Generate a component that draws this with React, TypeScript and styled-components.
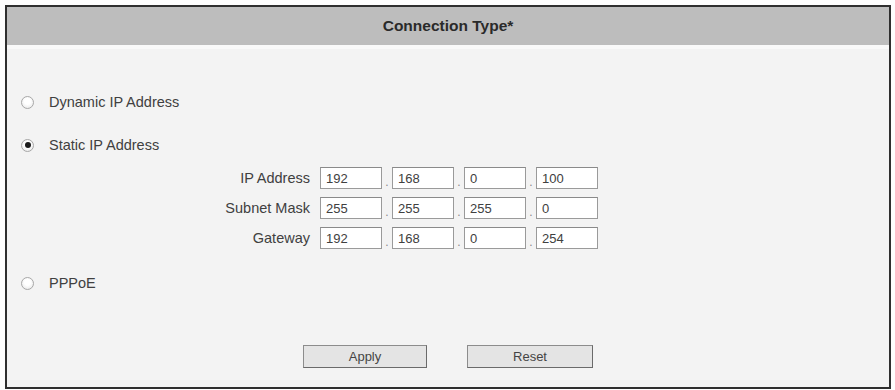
import React from 'react';
import styled, { createGlobalStyle } from 'styled-components';

const GlobalStyle = createGlobalStyle`
  html, body {
    margin: 0;
    padding: 0;
    background: #fdfdfd;
  }
  body {
    font-family: 'Liberation Sans', Arial, sans-serif;
  }
`;

const octets = {
  ip: ['192', '168', '0', '100'],
  mask: ['255', '255', '255', '0'],
  gateway: ['192', '168', '0', '254'],
};

const Radio: React.FC<{ checked?: boolean }> = ({ checked }) => (
  <RadioCircle>{checked && <RadioDot />}</RadioCircle>
);

const OctetRow: React.FC<{ label: string; values: string[] }> = ({ label, values }) => (
  <>
    <FieldLabel>{label}</FieldLabel>
    <Octets>
      {values.map((v, i) => (
        <React.Fragment key={i}>
          {i > 0 && <Dot>.</Dot>}
          <Octet defaultValue={v} />
        </React.Fragment>
      ))}
    </Octets>
  </>
);

const App: React.FC = () => {
  return (
    <>
      <GlobalStyle />
      <Frame>
        <Header>Connection Type*</Header>
        <Body>
          <Option>
            <Radio />
            <OptionLabel>Dynamic IP Address</OptionLabel>
          </Option>
          <Option $top={23}>
            <Radio checked />
            <OptionLabel>Static IP Address</OptionLabel>
          </Option>
          <FieldGrid>
            <OctetRow label="IP Address" values={octets.ip} />
            <OctetRow label="Subnet Mask" values={octets.mask} />
            <OctetRow label="Gateway" values={octets.gateway} />
          </FieldGrid>
          <Option $top={24}>
            <Radio />
            <OptionLabel>PPPoE</OptionLabel>
          </Option>
          <Buttons>
            <Button $wide={124}>Apply</Button>
            <Button $wide={126}>Reset</Button>
          </Buttons>
        </Body>
      </Frame>
    </>
  );
};

export default App;

const Frame = styled.div`
  margin: 5px 0 0 5px;
  width: 882px;
  height: 380px;
  border: 2px solid #2e2e2e;
  display: flex;
  flex-direction: column;
  background: #f3f3f3;
`;

const Header = styled.div`
  height: 38px;
  background: #bdbdbd;
  display: flex;
  justify-content: center;
  align-items: center;
  font-size: 15.5px;
  font-weight: 700;
  color: #2a2a2a;
  border-bottom: 4px solid #f9f9f9;
`;

const Body = styled.div`
  flex: 1;
  display: flex;
  flex-direction: column;
  padding: 43px 0 0 14px;
`;

const Option = styled.div<{ $top?: number }>`
  display: flex;
  align-items: center;
  height: 20px;
  gap: 15px;
  margin-top: ${({ $top }) => $top ?? 0}px;
`;

const RadioCircle = styled.span`
  box-sizing: border-box;
  width: 13px;
  height: 13px;
  border-radius: 50%;
  border: 1px solid #a8a8a8;
  background: radial-gradient(circle at 50% 40%, #ffffff 35%, #e2e2e2 100%);
  display: flex;
  justify-content: center;
  align-items: center;
  flex-shrink: 0;
`;

const RadioDot = styled.span`
  width: 6px;
  height: 6px;
  border-radius: 50%;
  background: #1a1a1a;
`;

const OptionLabel = styled.span`
  font-size: 14.5px;
  color: #404040;
`;

const FieldGrid = styled.div`
  display: grid;
  grid-template-columns: 100px auto;
  column-gap: 10px;
  row-gap: 8px;
  align-items: center;
  margin: 12px 0 0 189px;
  justify-content: start;
`;

const FieldLabel = styled.span`
  text-align: right;
  font-size: 14.5px;
  color: #404040;
  white-space: nowrap;
`;

const Octets = styled.div`
  display: flex;
  align-items: stretch;
  height: 22px;
`;

const Octet = styled.input`
  box-sizing: border-box;
  width: 62px;
  height: 22px;
  margin: 0;
  padding: 0 0 0 5px;
  border: 1px solid #9a9a9a;
  border-top-color: #8a8a8a;
  background: #ffffff;
  font-family: 'Liberation Sans', Arial, sans-serif;
  font-size: 13px;
  color: #404040;
  outline: none;
`;

const Dot = styled.span`
  width: 10px;
  text-align: center;
  font-size: 12px;
  line-height: 12px;
  color: #8a8a8a;
  align-self: flex-end;
  padding-bottom: 1px;
`;

const Buttons = styled.div`
  display: flex;
  justify-content: center;
  gap: 40px;
  margin: 52px 0 0 -14px;
`;

const Button = styled.button<{ $wide: number }>`
  box-sizing: border-box;
  width: ${({ $wide }) => $wide}px;
  height: 23px;
  padding: 0;
  background: #e4e4e4;
  border: 1px solid #8c8c8c;
  border-right-color: #6a6a6a;
  border-bottom-color: #6a6a6a;
  font-family: 'Liberation Sans', Arial, sans-serif;
  font-size: 13px;
  color: #444;
  cursor: pointer;
`;
